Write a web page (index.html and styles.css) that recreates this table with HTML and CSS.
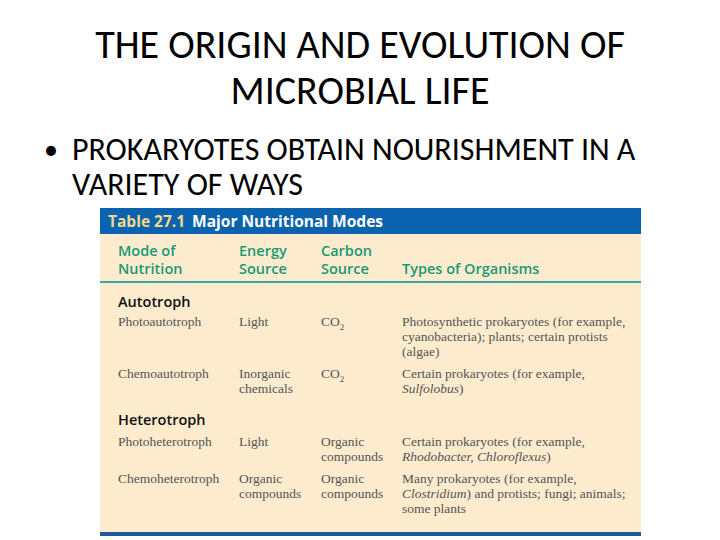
FILE: index.html
```html
<!DOCTYPE html>
<html>
<head>
<meta charset="utf-8">
<link rel="stylesheet" href="styles.css">
</head>
<body>
<div class="slide">
  <h1 class="title">THE ORIGIN AND EVOLUTION OF<br>MICROBIAL LIFE</h1>
  <div class="bullet">
    <span class="dot">•</span>
    <p class="bullet-text">PROKARYOTES OBTAIN NOURISHMENT IN A VARIETY OF WAYS</p>
  </div>
  <div class="table">
    <div class="caption"><span class="num">Table 27.1</span> Major Nutritional Modes</div>
    <div class="body">
      <div class="grid head">
        <div>Mode of<br>Nutrition</div>
        <div>Energy<br>Source</div>
        <div>Carbon<br>Source</div>
        <div class="bottom">Types of Organisms</div>
      </div>
      <div class="rule"></div>
      <div class="group">Autotroph</div>
      <div class="grid row">
        <div>Photoautotroph</div>
        <div>Light</div>
        <div>CO<sub>2</sub></div>
        <div>Photosynthetic prokaryotes (for example, cyanobacteria); plants; certain protists (algae)</div>
      </div>
      <div class="grid row">
        <div>Chemoautotroph</div>
        <div>Inorganic chemicals</div>
        <div>CO<sub>2</sub></div>
        <div>Certain prokaryotes (for example, <i>Sulfolobus</i>)</div>
      </div>
      <div class="group second">Heterotroph</div>
      <div class="grid row">
        <div>Photoheterotroph</div>
        <div>Light</div>
        <div>Organic compounds</div>
        <div>Certain prokaryotes (for example, <i>Rhodobacter, Chloroflexus</i>)</div>
      </div>
      <div class="grid row">
        <div>Chemoheterotroph</div>
        <div>Organic compounds</div>
        <div>Organic compounds</div>
        <div>Many prokaryotes (for example, <i>Clostridium</i>) and protists; fungi; animals; some plants</div>
      </div>
    </div>
    <div class="foot"></div>
  </div>
</div>
</body>
</html>
```

FILE: styles.css
```css
html, body {
  margin: 0;
  padding: 0;
  background: #ffffff;
}
.slide {
  width: 720px;
  height: 540px;
  overflow: hidden;
  font-family: "Carlito", "Liberation Sans Narrow", "Open Sans", sans-serif;
  color: #000;
}
.title {
  margin: 0;
  padding-top: 22px;
  font-weight: normal;
  font-size: 40px;
  line-height: 46px;
  text-align: center;
}
.bullet {
  display: flex;
  margin-top: 18px;
  padding-left: 44px;
}
.dot {
  width: 28px;
  font-size: 28px;
  line-height: 36px;
}
.bullet-text {
  margin: 0;
  width: 600px;
  font-size: 32px;
  line-height: 35px;
}
.table {
  margin-left: 100px;
  width: 541px;
  margin-top: 6px;
}
.caption {
  background: #0b62ae;
  color: #fff;
  font-family: "Open Sans", sans-serif;
  font-weight: bold;
  font-size: 15.5px;
  height: 26px;
  line-height: 26px;
  padding-left: 8px;
  white-space: nowrap;
}
.num {
  color: #f2d98c;
  margin-right: 3px;
}
.body {
  background: #fdebcd;
  padding: 8px 0 9px 18px;
}
.grid {
  display: grid;
  grid-template-columns: 121px 82px 81px 1fr;
}
.head {
  font-family: "Open Sans", sans-serif;
  font-weight: 600;
  color: #1a9878;
  font-size: 14.5px;
  line-height: 18px;
}
.head .bottom {
  align-self: end;
}
.rule {
  height: 2px;
  background: #3ba7a5;
  margin: 3px 0 10px -18px;
}
.group {
  font-family: "Open Sans", sans-serif;
  font-weight: 600;
  font-size: 14.5px;
  line-height: 18px;
  color: #111;
  margin-bottom: 3px;
}
.group.second {
  margin-top: 15px;
  margin-bottom: 5px;
}
.row {
  font-family: "Liberation Serif", serif;
  color: #555;
  font-size: 13.5px;
  line-height: 15px;
  margin-bottom: 7px;
}
.row > div {
  padding-right: 4px;
}
.row sub {
  font-size: 9px;
  line-height: 0;
}
.foot {
  height: 4px;
  background: #1e5c97;
}
```
